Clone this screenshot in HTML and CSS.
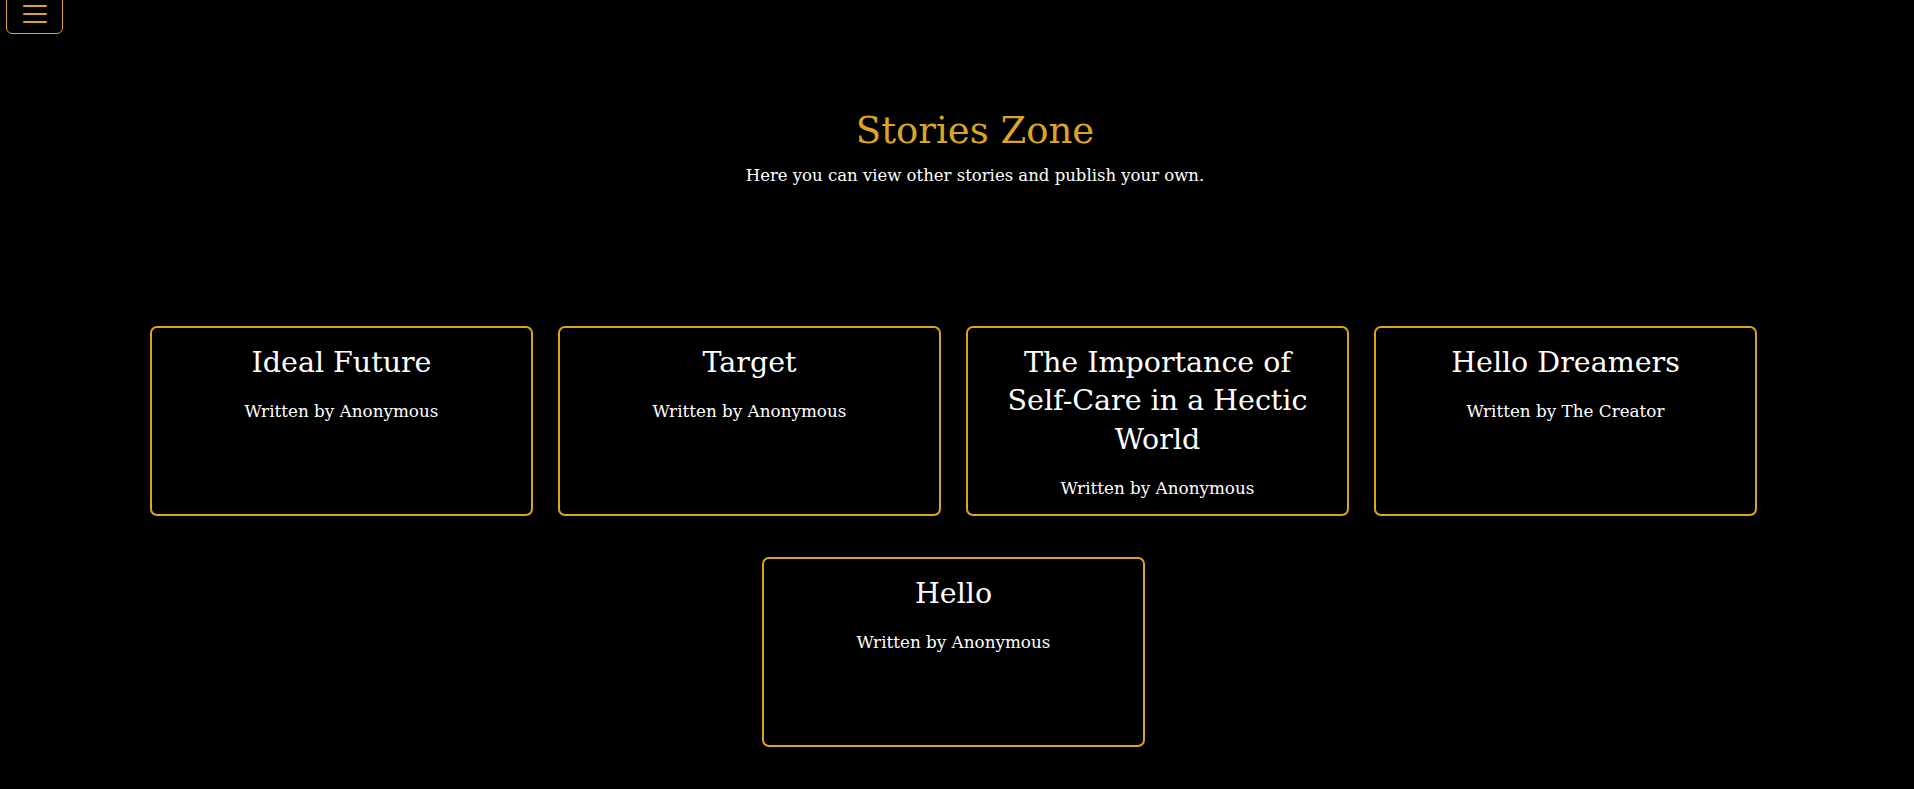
FILE: index.html
```html
<!DOCTYPE html>
<html lang="en">
<head>
<meta charset="utf-8">
<title>Stories Zone</title>
<link rel="stylesheet" href="styles.css">
</head>
<body>
<nav class="topbar">
  <button class="toggler" type="button" aria-label="Menu">
    <svg class="toggler-icon" width="30" height="30" viewBox="0 0 30 30" aria-hidden="true">
      <path d="M4 7h22M4 15h22M4 23h22" stroke="#daa520" stroke-width="2" stroke-linecap="round" fill="none"/>
    </svg>
  </button>
</nav>
<header class="hero">
  <h1 class="hero-title">Stories Zone</h1>
  <p class="hero-sub">Here you can view other stories and publish your own.</p>
</header>
<main class="stories">
  <article class="story-card">
    <h2 class="story-title">Ideal Future</h2>
    <p class="story-author">Written by Anonymous</p>
  </article>
  <article class="story-card">
    <h2 class="story-title">Target</h2>
    <p class="story-author">Written by Anonymous</p>
  </article>
  <article class="story-card">
    <h2 class="story-title">The Importance of Self-Care in a Hectic World</h2>
    <p class="story-author">Written by Anonymous</p>
  </article>
  <article class="story-card">
    <h2 class="story-title">Hello Dreamers</h2>
    <p class="story-author">Written by The Creator</p>
  </article>
  <article class="story-card">
    <h2 class="story-title">Hello</h2>
    <p class="story-author">Written by Anonymous</p>
  </article>
</main>
</body>
</html>
```

FILE: styles.css
```css
* {
  box-sizing: border-box;
}

html, body {
  margin: 0;
  padding: 0;
  background: #000;
}

body {
  font-family: "DejaVu Serif", "Liberation Serif", serif;
  color: #fff;
  overflow: hidden;
}

.topbar {
  display: flex;
  padding-left: 6px;
  height: 34px;
}

.toggler {
  margin-top: -6px;
  width: 57px;
  height: 40px;
  padding: 4px 12px;
  border: 1.5px solid #daa520;
  border-radius: 6px;
  background: transparent;
  display: flex;
  align-items: center;
  justify-content: center;
  cursor: pointer;
}

.toggler-icon {
  display: block;
  flex: none;
}

.hero {
  text-align: center;
  padding-top: 73px;
  padding-left: 36px;
}

.hero-title {
  margin: 0;
  font-weight: 400;
  font-size: 37px;
  line-height: 48px;
  color: #daa520;
}

.hero-sub {
  margin: 9px 0 0;
  font-size: 16.5px;
  line-height: 24px;
  color: #fff;
}

.stories {
  width: 1607px;
  margin: 138px 0 0 150px;
  display: flex;
  flex-wrap: wrap;
  justify-content: center;
  column-gap: 25px;
  row-gap: 41px;
}

.story-card {
  width: 383px;
  height: 190px;
  border: 2px solid #daa520;
  border-radius: 7px;
  padding: 16px 29px;
  text-align: center;
}

.story-title {
  margin: 0;
  font-weight: 400;
  font-size: 28.5px;
  line-height: 38.4px;
  color: #fff;
}

.story-author {
  margin: 17px 0 0;
  font-size: 16.8px;
  line-height: 24px;
  color: #fff;
}
```
